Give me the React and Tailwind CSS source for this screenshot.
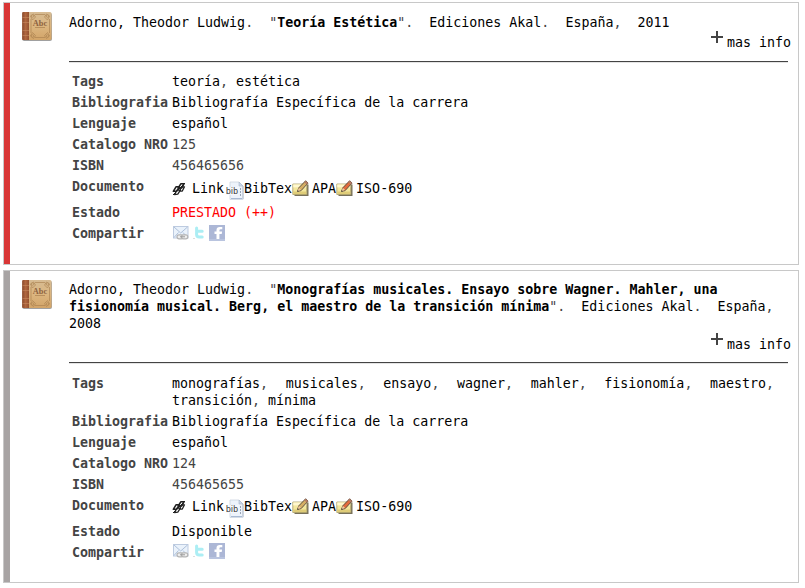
import React from "react";

function BookIcon() {
  return (
    <svg width="32" height="32" viewBox="0 0 32 32" className="block">
      <defs>
        <linearGradient id="cover" x1="0" y1="0" x2="0" y2="1">
          <stop offset="0" stopColor="#d6bb93" />
          <stop offset="0.5" stopColor="#dcb680" />
          <stop offset="1" stopColor="#d2a468" />
        </linearGradient>
        <linearGradient id="spine" x1="0" y1="0" x2="1" y2="0">
          <stop offset="0" stopColor="#8a4a2e" />
          <stop offset="0.5" stopColor="#b1683f" />
          <stop offset="1" stopColor="#93502f" />
        </linearGradient>
      </defs>
      <rect x="1.200" y="2" width="29.800" height="28" rx="2" fill="#777" opacity="0.7" />
      <rect x="1.200" y="1" width="29.300" height="28" rx="1.500" fill="url(#cover)" />
      <path d="M2.200 1H8v28H2.200a1 1 0 0 1-1-1V2a1 1 0 0 1 1-1z" fill="url(#spine)" />
      <path d="M1.500 6.500H8M1.500 11.500H8M1.500 19.500H8M1.500 24.500H8" stroke="#cf9468" strokeWidth="0.8" opacity="0.6" />
      <g fill="none" stroke="#a9804f" strokeWidth="0.9" opacity="0.7">
        <path d="M14 3.500h10M14 26.500h10M10 8v14M28.500 8v14" />
        <path d="M9.500 5l3-2 2 3-3 3zM28.500 5l-3-2-2 3 3 3zM9.500 25l3 2.500 2-3-3-3zM28.500 25l-3 2.500-2-3 3-3z" />
        <circle cx="11.500" cy="5" r="1.300" />
        <circle cx="26.500" cy="5" r="1.300" />
        <circle cx="11.500" cy="25" r="1.300" />
        <circle cx="26.500" cy="25" r="1.300" />
      </g>
      <text x="19" y="14.500" textAnchor="middle" fontFamily="Liberation Serif, serif" fontWeight="bold" fontSize="8.300" fill="#8e6240">Abc</text>
      <path d="M14 16.500h10" stroke="#a9804f" strokeWidth="0.7" />
    </svg>
  );
}

function PlusIcon() {
  return (
    <svg width="16" height="16" viewBox="0 0 16 16" className="mb-[5px] shrink-0">
      <path d="M2 8h12M8 2v12" stroke="#444" strokeWidth="2" />
    </svg>
  );
}

function LinkIcon() {
  return (
    <svg width="14" height="14" viewBox="0 0 14 14" className="shrink-0">
      <g fill="none" stroke="#202020" strokeLinejoin="round">
        <path d="M1.300 9.300L4 4.800h3.200L4.600 9.300zM6.200 6L8.800 1.800H12L9.600 6z" strokeWidth="1.600" />
        <path d="M2.600 12.500L5 8.200h3.400L5.800 12.200zM7.300 9.200l2.500-4.400h2.700L10.300 9z" strokeWidth="1.300" />
      </g>
      <path d="M1 13L13 1" stroke="#202020" strokeWidth="1" />
    </svg>
  );
}

function BibIcon() {
  return (
    <svg width="18" height="19" viewBox="0 0 18 19" className="shrink-0">
      <path d="M4 1h9l4 4v13.500H4z" fill="#edf3fb" stroke="#ccd4e0" strokeWidth="0.8" />
      <path d="M13 1v4h4z" fill="#c9d8ec" stroke="#a8b5c8" strokeWidth="0.6" />
      <path d="M5 17.500h11" stroke="#a9bad3" />
      <path d="M14.500 7v9" stroke="#8f9bad" strokeWidth="0.9" strokeDasharray="2 1" />
      <path d="M17 5v13" stroke="#a6b1c3" strokeWidth="0.8" />
      <rect x="0" y="6" width="12.500" height="8" fill="#f7f9fc" opacity="0.8" />
      <text x="0" y="12.500" fontFamily="Liberation Sans, sans-serif" fontSize="8.500" fill="#333" textLength="12">bib</text>
    </svg>
  );
}

function NoteIcon({ pencil }) {
  return (
    <svg width="17" height="17" viewBox="0 0 17 17" className="shrink-0">
      <path d="M2.500 4.500h14v11.500h-14z" fill="#77705a" />
      <path d="M.8 4h14v10.500H.8z" fill="#f3e79d" stroke="#a79d68" strokeWidth="0.8" />
      <path d="M1.200 4.400h13v3h-13z" fill="#fff8cf" />
      <path d="M1.200 11.500h13v2.600h-13z" fill="#dfcc78" />
      <path d="M5.600 11.300l1.200-3.500L13.600.8l2.500 2.200-7 7.600z" fill={pencil} stroke="#4e4237" strokeWidth="0.9" />
      <path d="M12.200 2.300l2.400 2.300 1.500-1.600L13.700.8z" fill="#b47c65" />
      <path d="M5.600 11.300l1.200-3.500 2.300 2.300z" fill="#f0c99c" />
      <path d="M5.300 11.700l.5-1.500 1 1z" fill="#222" />
    </svg>
  );
}

function MailIcon() {
  return (
    <svg width="17" height="16" viewBox="0 0 17 16" className="shrink-0">
      <rect x="1.500" y="1.500" width="14.500" height="11.500" fill="#eaf2fb" stroke="#bdcbe0" />
      <path d="M2 2l6.700 6L15.500 2M2 12.500l4.500-5M15.500 12.500L11 7.500" fill="none" stroke="#adc0da" />
      <g fill="#eee" stroke="#b4b4b4" strokeWidth="1.200">
        <rect x="5" y="9.800" width="6.300" height="4" rx="2" />
        <rect x="9.500" y="9.800" width="6.300" height="4" rx="2" />
      </g>
      <path d="M8 11.800h5" stroke="#999" />
    </svg>
  );
}

function TwitterIcon() {
  return (
    <svg width="11" height="14" viewBox="0 0 11 14" className="shrink-0">
      <path d="M3.600 2v6.500q0 2.500 2.600 2.500h3M3.800 5.300h5.400" fill="none" stroke="#aceef4" strokeWidth="3" strokeLinecap="round" />
      <path d="M0 12.500h2" stroke="#ddd" />
    </svg>
  );
}

function FacebookIcon() {
  return (
    <svg width="16" height="16" viewBox="0 0 16 16" className="shrink-0">
      <path d="M0 0h16v16H0z" fill="#acb7d6" />
      <path d="M0 14h16v2H0z" fill="#b9c4df" />
      <path d="M7.500 14V9H5.500V6.600h2V5q0-3 3.200-3h2.600v2.300h-1.500q-1.400 0-1.400 1.200v1.100h2.700L12.700 9h-2.300v5z" fill="#fff" />
    </svg>
  );
}

function Row({ label, height = "h-[21px]", children }) {
  return (
    <div className={"flex pt-0.5 " + height}>
      <dt className="w-[100px] shrink-0 font-bold text-[#444]">{label}</dt>
      <dd className="w-[602px] text-justify text-black">{children}</dd>
    </div>
  );
}

const P = ({ children }) => <span className="text-[#444]">{children}</span>;

function Tags({ tags }) {
  return tags.map((tag, i) => (
    <React.Fragment key={tag}>
      {tag}
      {i < tags.length - 1 && <P>, </P>}
    </React.Fragment>
  ));
}

function Card({ item }) {
  return (
    <article className={"flex w-[796px] border border-[#c8c8c8] bg-white " + item.height}>
      <div className={"w-1.5 shrink-0 " + item.stripe} />
      <div className="ml-[11px] mt-2 w-8 shrink-0">
        <BookIcon />
      </div>
      <div className="ml-4 w-[722px]">
        <h2 className={"w-[719px] text-black " + item.titleTop}>
          Adorno, Theodor Ludwig<P>.&nbsp; "</P>
          <b>{item.title}</b>
          <P>".&nbsp; </P>Ediciones Akal<P>.&nbsp; </P>España<P>,&nbsp; </P>
          {item.year}
        </h2>
        <div className={"flex h-[22px] items-end justify-end text-black " + item.infoTop}>
          <PlusIcon />
          <span className="ml-0.5 -mb-px">mas info</span>
        </div>
        <div className={"h-0.5 w-[719px] border-b border-t border-b-[#e4e4e4] border-t-[#444] " + item.ruleTop} />
        <dl className={"ml-[3px] " + item.listTop}>
          <Row label="Tags" height={item.tagsHeight}><Tags tags={item.tags} /></Row>
          <Row label="Bibliografia">Bibliografía Específica de la carrera</Row>
          <Row label="Lenguaje">español</Row>
          <Row label="Catalogo NRO"><P>{item.number}</P></Row>
          <Row label="ISBN"><P>{item.isbn}</P></Row>
          <Row label="Documento" height="h-[26px]">
            <span className={"flex h-[21px] items-center " + item.mediaShift}>
              <LinkIcon />
              <span className="ml-1.5">Link</span>
              <span className="ml-0.5 mt-1"><BibIcon /></span>
              <span>BibTex</span>
              <NoteIcon pencil="#d5ae64" />
              <span className="ml-[3px]">APA</span>
              <NoteIcon pencil="#e36b3d" />
              <span className="ml-[3px]">ISO-690</span>
            </span>
          </Row>
          <Row label="Estado"><span className={item.statusColor}>{item.status}</span></Row>
          <Row label="Compartir">
            <span className={"flex h-4 items-center " + item.mediaShift}>
              <MailIcon />
              <span className="ml-[4px]"><TwitterIcon /></span>
              <span className="ml-[5px]"><FacebookIcon /></span>
            </span>
          </Row>
        </dl>
      </div>
    </article>
  );
}

const items = [
  {
    title: "Teoría Estética", year: "2011", tags: ["teoría", "estética"],
    number: "125", isbn: "456465656", status: "PRESTADO (++)", statusColor: "text-[#f00]",
    stripe: "bg-[#d93636]", height: "h-[263px]", titleTop: "mt-[11px]", mediaShift: "mt-0",
    infoTop: "-mt-[3px]", ruleTop: "mt-[11px]", listTop: "mt-[8px]", tagsHeight: "h-[21px]",
  },
  {
    title: "Monografías musicales. Ensayo sobre Wagner. Mahler, una fisionomía musical. Berg, el maestro de la transición mínima",
    year: "2008", tags: ["monografías", "musicales", "ensayo", "wagner", "mahler", "fisionomía", "maestro", "transición", "mínima"],
    number: "124", isbn: "456465655", status: "Disponible", statusColor: "text-black",
    stripe: "bg-[#a8a4a4]", height: "h-[313px]", titleTop: "mt-[10px]", mediaShift: "-mt-px",
    infoTop: "-mt-[2px]", ruleTop: "mt-[10px]", listTop: "mt-[9px]", tagsHeight: "h-[38px]",
  },
];

export default function App() {
  return (
    <main className="flex h-[588px] w-[805px] flex-col gap-[5px] overflow-hidden bg-white pl-[3px] pt-[2px] font-['DejaVu_Sans_Mono',monospace] text-[13.3px] leading-[17px]">
      {items.map((item) => <Card key={item.number} item={item} />)}
    </main>
  );
}
